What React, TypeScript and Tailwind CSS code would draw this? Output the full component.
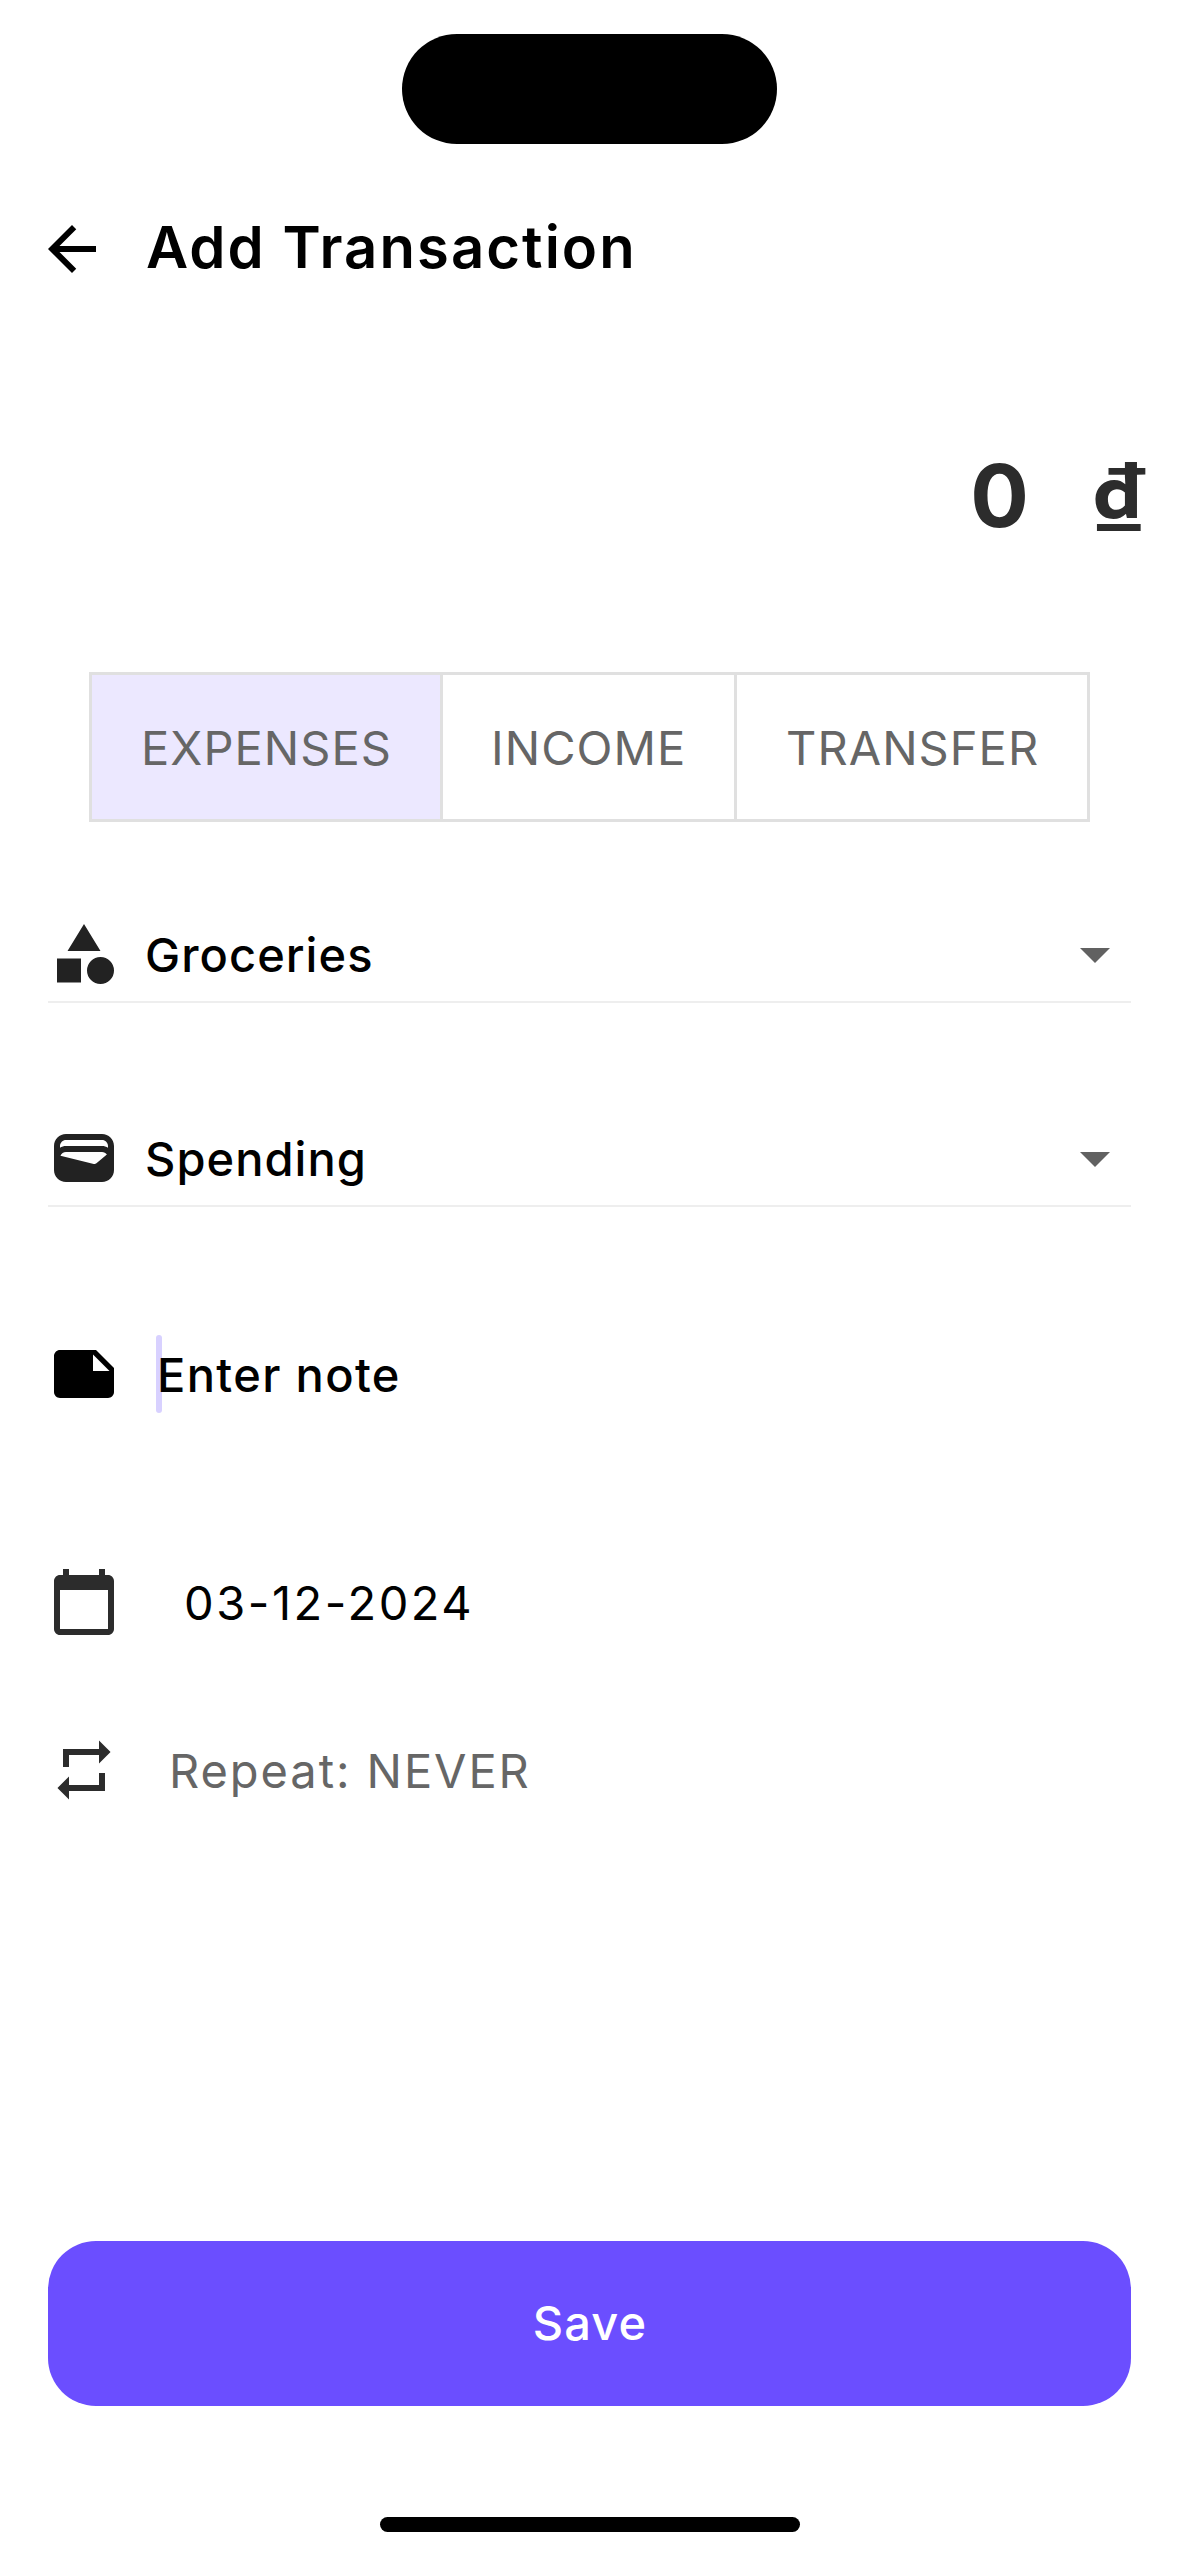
import React from "react";

type IconProps = { d: string; className?: string };

function Icon({ d, className = "" }: IconProps) {
  return (
    <svg viewBox="0 0 24 24" className={`size-[72px] shrink-0 ${className}`} fill="currentColor" aria-hidden="true">
      <path d={d} />
    </svg>
  );
}

const ICONS = {
  back: "M20 11H7.83l5.59-5.59L12 4l-8 8 8 8 1.41-1.41L7.83 13H20v-2z",
  category: "M12 2l-5.5 9h11zM17.5 13a4.5 4.5 0 1 0 0 9 4.5 4.5 0 0 0 0-9zM3 13.5h8v8H3z",
  wallet:
    "M18 4H6C3.79 4 2 5.79 2 8v8c0 2.21 1.79 4 4 4h12c2.21 0 4-1.79 4-4V8c0-2.21-1.79-4-4-4zm-1.86 9.77c-.24.2-.57.28-.88.2L4.15 11.25C4.45 10.52 5.16 10 6 10h12c.67 0 1.26.34 1.63.84l-3.49 2.93zM6 6h12c1.1 0 2 .9 2 2v.55c-.59-.34-1.27-.55-2-.55H6c-.73 0-1.41.21-2 .55V8c0-1.1.9-2 2-2z",
  note: "M22 10l-6-6H4c-1.1 0-2 .9-2 2v12.01c0 1.1.9 1.99 2 1.99l16-.01c1.1 0 2-.89 2-1.99v-8zm-7-4.5l5.5 5.5H15V5.5z",
  calendar:
    "M20 3h-1V1h-2v2H7V1H5v2H4c-1.1 0-2 .9-2 2v16c0 1.1.9 2 2 2h16c1.1 0 2-.9 2-2V5c0-1.1-.9-2-2-2zm0 18H4V8h16v13z",
  repeat: "M5 5h12V2.15L20.85 6 17 9.85V7H7v4H5zM19 19H7v2.85L3.15 18 7 14.15V17h10v-4h2z",
  dropDown: "M7 10l5 5 5-5z",
};

function SelectRow({ icon, label }: { icon: string; label: string }) {
  return (
    <button className="flex h-[85px] w-full items-start border-b-2 border-[#eeeeee] text-left">
      <Icon d={icon} className="text-[#222222]" />
      <span className="ml-[25px] mt-[1px] flex-1 text-[47px] leading-[72px] font-medium tracking-[1.05px]">{label}</span>
      <Icon d={ICONS.dropDown} className="text-[#616161]" />
    </button>
  );
}

function Tab({ label, className }: { label: string; className: string }) {
  return (
    <button className={`h-full pt-[2px] text-left text-[47px] tracking-[1.05px] text-[#666666] ${className}`}>
      {label}
    </button>
  );
}

export default function App() {
  return (
    <main className="flex h-[2556px] w-[1179px] flex-col overflow-hidden bg-white font-['Inter',sans-serif] text-black">
      <div className="mt-[34px] h-[110px] w-[375px] shrink-0 self-center rounded-full bg-black" />

      <header className="mt-[69px] flex h-[72px] items-center pl-9">
        <Icon d={ICONS.back} />
        <h1 className="mb-[3px] ml-[38px] text-[58px] leading-[69px] font-semibold tracking-[2.05px]">
          Add Transaction
        </h1>
      </header>

      <section className="mt-[161px] flex h-[100px] items-center justify-end pr-[32px] text-[#2c2c2c]">
        <span className="text-[87px] leading-[100px] font-bold">0</span>
        <span className="ml-[58px] flex h-full w-[60px] items-start justify-center">
          <span className="mt-[1px] origin-center scale-x-107 font-['Noto_Sans_CJK_SC',sans-serif] text-[93px] leading-[88px] font-bold">
            ₫
          </span>
        </span>
      </section>

      <section className="mt-[126px] ml-[89px] flex h-[150px] w-[1001px] border-[3px] border-[#e0e0e0]">
        <Tab label="EXPENSES" className="w-[348px] bg-[#ece8ff] pl-[49px]" />
        <Tab label="INCOME" className="w-[294px] border-l-[3px] border-[#e0e0e0] pl-[48px]" />
        <Tab label="TRANSFER" className="flex-1 border-l-[3px] border-[#e0e0e0] pl-[49px]" />
      </section>

      <section className="mt-24 flex flex-col gap-[119px] px-12">
        <SelectRow icon={ICONS.category} label="Groceries" />
        <SelectRow icon={ICONS.wallet} label="Spending" />
      </section>

      <section className="mt-[128px] flex h-[78px] items-center px-12">
        <Icon d={ICONS.note} />
        <div className="relative ml-9 flex h-full items-center">
          <span className="absolute inset-y-0 left-0 w-1.5 rounded-full bg-[#d8d1ff]" />
          <span className="relative pl-[1px] pt-[2px] text-[47px] leading-[76px] font-medium tracking-[1.35px]">
            Enter note
          </span>
        </div>
      </section>

      <section className="mt-[153px] flex h-[72px] items-center px-12">
        <Icon d={ICONS.calendar} className="text-[#2c2c2c]" />
        <span className="mt-[2px] ml-[64px] text-[47px] leading-[72px] tracking-[2.55px]">03-12-2024</span>
      </section>

      <section className="mt-24 flex h-[72px] items-center px-12">
        <Icon d={ICONS.repeat} className="text-[#2c2c2c]" />
        <span className="mt-[2px] ml-[49px] text-[47px] leading-[72px] tracking-[1.93px] text-[#666666]">
          Repeat: NEVER
        </span>
      </section>

      <button className="mx-12 mt-[435px] h-[165px] shrink-0 rounded-[48px] bg-[#6b4eff] pl-[1px] text-[47px] font-medium tracking-[1.1px] text-white">
        Save
      </button>

      <div className="mt-[111px] h-[15px] w-[420px] shrink-0 self-center rounded-full bg-black" />
    </main>
  );
}
